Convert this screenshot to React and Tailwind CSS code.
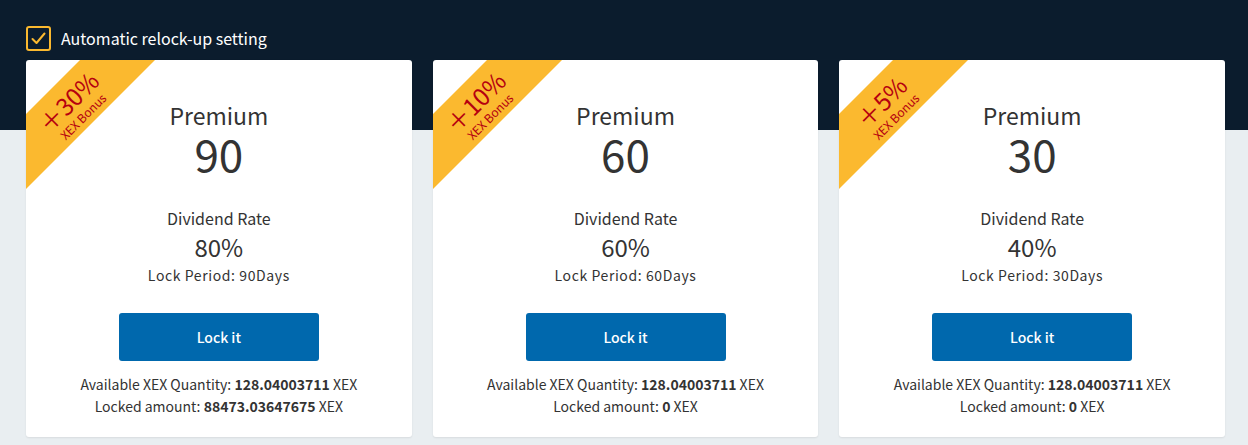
import { useState } from 'react';

const plans = [
  { bonus: '30%', days: 90, rate: '80%', locked: '88473.03647675' },
  { bonus: '10%', days: 60, rate: '60%', locked: '0' },
  { bonus: '5%', days: 30, rate: '40%', locked: '0' },
];

const PlanCard = ({ plan }) => (
  <div className="relative flex-1 overflow-hidden rounded-[3px] bg-white pt-[41px] pb-[20px] text-center text-[#333] shadow-[0_1px_2px_rgba(0,0,0,0.08)]">
    {/* Bonus ribbon */}
    <div className="absolute left-[-54px] top-[19px] flex h-[53px] w-[200px] -rotate-45 flex-col items-center bg-[#fbb92f] pt-[8px] text-[#b5000f]">
      <span className="text-[24px] leading-[26px]">＋{plan.bonus}</span>
      <span className="mt-[1px] text-[12px] leading-[13px]">XEX Bonus</span>
    </div>

    <div className="text-[23px] leading-[28px]">Premium</div>
    <div className="mt-[2px] text-[44px] leading-[44px]">{plan.days}</div>

    <div className="mt-[32px] text-[16px] leading-[22px]">Dividend Rate</div>
    <div className="mt-[3px] text-[24px] leading-[30px]">{plan.rate}</div>
    <div className="mt-[3px] text-[14px] tracking-[0.6px] leading-[20px]">Lock Period: {plan.days}Days</div>

    <button className="mx-auto mt-[28px] flex h-[48px] w-[200px] items-center justify-center rounded-[3px] bg-[#0068ad] text-[14px] font-medium text-white">
      Lock it
    </button>

    <div className="mt-[12px] text-[14px] leading-[22px]">
      Available XEX Quantity: <span className="font-bold">128.04003711</span> XEX
    </div>
    <div className="text-[14px] leading-[22px]">
      Locked amount: <span className="font-bold">{plan.locked}</span> XEX
    </div>
  </div>
);

export default function App() {
  const [relock, setRelock] = useState(true);

  return (
    <div
      className="min-h-[445px] bg-[#e9eef1]"
      style={{ fontFamily: '"Noto Sans CJK JP", "Noto Sans", sans-serif' }}
    >
      <div className="h-[130px] bg-[#0b1c2d] px-[26px] pt-[26px]">
        <label className="flex cursor-pointer items-center gap-[10px] text-[16px] leading-[25px] text-white">
          <button
            onClick={() => setRelock(!relock)}
            className="flex h-[25px] w-[25px] items-center justify-center rounded-[3px] border-2 border-[#fbb92f]"
          >
            {relock && (
              <svg width="17" height="17" viewBox="0 0 17 17" fill="none">
                <path d="M2.5 9 L6.5 13 L14.5 3.5" stroke="#fbb92f" strokeWidth="2" strokeLinecap="round" strokeLinejoin="round" />
              </svg>
            )}
          </button>
          Automatic relock-up setting
        </label>
      </div>

      {/* Plan cards */}
      <div className="-mt-[70px] flex gap-[21px] pl-[26px] pr-[23px]">
        {plans.map((p) => (
          <PlanCard key={p.days} plan={p} />
        ))}
      </div>
    </div>
  );
}
